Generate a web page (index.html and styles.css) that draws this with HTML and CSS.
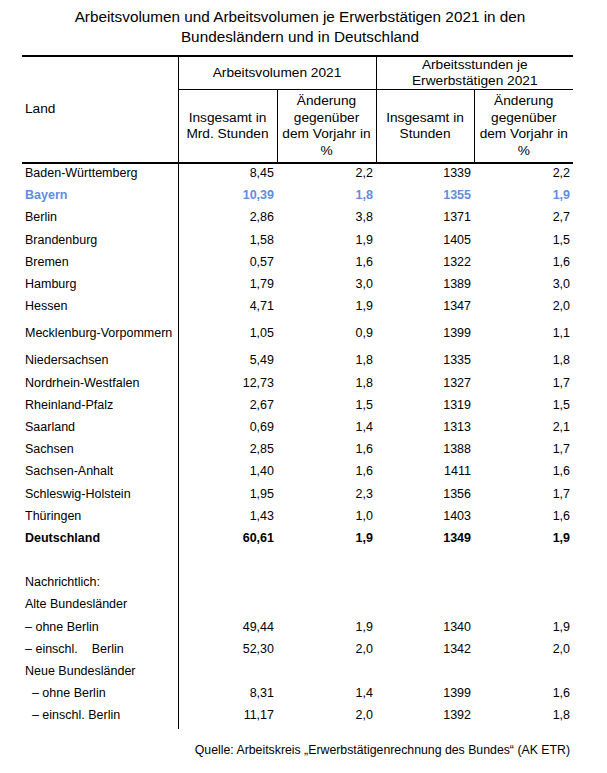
FILE: index.html
```html
<!DOCTYPE html>
<html lang="de">
<head>
<meta charset="utf-8">
<title>Arbeitsvolumen 2021</title>
<link rel="stylesheet" href="styles.css">
</head>
<body>
<h1 class="title">Arbeitsvolumen und Arbeitsvolumen je Erwerbstätigen 2021 in den<br>Bundesländern und in Deutschland</h1>
<table class="data">
  <colgroup>
    <col class="c-land"><col class="c-num"><col class="c-num"><col class="c-num3"><col class="c-num">
  </colgroup>
  <thead>
    <tr class="h1">
      <th class="land-h" rowspan="2">Land</th>
      <th class="grp sep" colspan="2">Arbeitsvolumen 2021</th>
      <th class="grp" colspan="2">Arbeitsstunden je<br>Erwerbstätigen 2021</th>
    </tr>
    <tr class="h2">
      <th class="sub sep">Insgesamt in<br>Mrd. Stunden</th>
      <th class="sub sep">Änderung<br>gegenüber<br>dem Vorjahr in<br>%</th>
      <th class="sub sep">Insgesamt in<br>Stunden</th>
      <th class="sub">Änderung<br>gegenüber<br>dem Vorjahr in<br>%</th>
    </tr>
  </thead>
  <tbody>
    <tr><td class="land">Baden-Württemberg</td><td>8,45</td><td>2,2</td><td>1339</td><td>2,2</td></tr>
    <tr class="hl"><td class="land">Bayern</td><td>10,39</td><td>1,8</td><td>1355</td><td>1,9</td></tr>
    <tr><td class="land">Berlin</td><td>2,86</td><td>3,8</td><td>1371</td><td>2,7</td></tr>
    <tr><td class="land">Brandenburg</td><td>1,58</td><td>1,9</td><td>1405</td><td>1,5</td></tr>
    <tr><td class="land">Bremen</td><td>0,57</td><td>1,6</td><td>1322</td><td>1,6</td></tr>
    <tr><td class="land">Hamburg</td><td>1,79</td><td>3,0</td><td>1389</td><td>3,0</td></tr>
    <tr><td class="land">Hessen</td><td>4,71</td><td>1,9</td><td>1347</td><td>2,0</td></tr>
    <tr class="tall"><td class="land">Mecklenburg-Vorpommern</td><td>1,05</td><td>0,9</td><td>1399</td><td>1,1</td></tr>
    <tr><td class="land">Niedersachsen</td><td>5,49</td><td>1,8</td><td>1335</td><td>1,8</td></tr>
    <tr><td class="land">Nordrhein-Westfalen</td><td>12,73</td><td>1,8</td><td>1327</td><td>1,7</td></tr>
    <tr><td class="land">Rheinland-Pfalz</td><td>2,67</td><td>1,5</td><td>1319</td><td>1,5</td></tr>
    <tr><td class="land">Saarland</td><td>0,69</td><td>1,4</td><td>1313</td><td>2,1</td></tr>
    <tr><td class="land">Sachsen</td><td>2,85</td><td>1,6</td><td>1388</td><td>1,7</td></tr>
    <tr><td class="land">Sachsen-Anhalt</td><td>1,40</td><td>1,6</td><td>1411</td><td>1,6</td></tr>
    <tr><td class="land">Schleswig-Holstein</td><td>1,95</td><td>2,3</td><td>1356</td><td>1,7</td></tr>
    <tr><td class="land">Thüringen</td><td>1,43</td><td>1,0</td><td>1403</td><td>1,6</td></tr>
    <tr class="total"><td class="land">Deutschland</td><td>60,61</td><td>1,9</td><td>1349</td><td>1,9</td></tr>
    <tr><td class="land"></td><td></td><td></td><td></td><td></td></tr>
    <tr><td class="land">Nachrichtlich:</td><td></td><td></td><td></td><td></td></tr>
    <tr><td class="land">Alte Bundesländer</td><td></td><td></td><td></td><td></td></tr>
    <tr><td class="land">– ohne Berlin</td><td>49,44</td><td>1,9</td><td>1340</td><td>1,9</td></tr>
    <tr><td class="land">– einschl.    Berlin</td><td>52,30</td><td>2,0</td><td>1342</td><td>2,0</td></tr>
    <tr><td class="land">Neue Bundesländer</td><td></td><td></td><td></td><td></td></tr>
    <tr><td class="land">  – ohne Berlin</td><td>8,31</td><td>1,4</td><td>1399</td><td>1,6</td></tr>
    <tr><td class="land">  – einschl. Berlin</td><td>11,17</td><td>2,0</td><td>1392</td><td>1,8</td></tr>
  </tbody>
</table>
<p class="source">Quelle: Arbeitskreis „Erwerbstätigenrechnung des Bundes“ (AK ETR)</p>
</body>
</html>
```
FILE: styles.css
```css
body {
  margin: 0;
  font-family: "Liberation Sans", Arial, sans-serif;
  color: #000;
  background: #fff;
}

.title {
  width: 600px;
  margin: 0;
  padding-top: 7px;
  text-align: center;
  font-size: 15.3px;
  line-height: 20px;
  font-weight: normal;
}

.data {
  margin: 8px 0 0 22px;
  width: 551px;
  border-collapse: collapse;
  table-layout: fixed;
}

.c-land { width: 156px; }
.c-num { width: 99px; }
.c-num3 { width: 98px; }

.data thead tr.h1 th {
  border-top: 2px solid #000;
  height: 32px;
}

.data thead tr.h2 th {
  height: 72px;
}

.data th {
  font-weight: normal;
  font-size: 13.7px;
  line-height: 16.5px;
  padding: 0 1px;
  text-align: center;
  vertical-align: middle;
}

.data th.land-h {
  text-align: left;
  padding-left: 3px;
  border-right: 1px solid #000;
  border-bottom: 2px solid #000;
}

.data th.grp {
  border-bottom: 1px solid #000;
  line-height: 16px;
}

.data th.sep {
  border-right: 1px solid #000;
}

.data th.sub {
  border-bottom: 2px solid #000;
}

.data td {
  font-size: 12.5px;
  line-height: 14px;
  height: 18.2px;
  padding: 0 3px 4px 0;
  text-align: right;
  vertical-align: middle;
  white-space: pre;
}

.data td.land {
  text-align: left;
  padding: 0 0 4px 3px;
  border-right: 1px solid #000;
}

.data tr.tall td {
  height: 28px;
}

.data tr.hl td {
  color: #5f8de3;
  font-weight: bold;
}

.data tr.total td {
  font-weight: bold;
}

.source {
  width: 548px;
  margin: 14px 0 0 22px;
  text-align: right;
  font-size: 12.3px;
  line-height: 14px;
}
```
